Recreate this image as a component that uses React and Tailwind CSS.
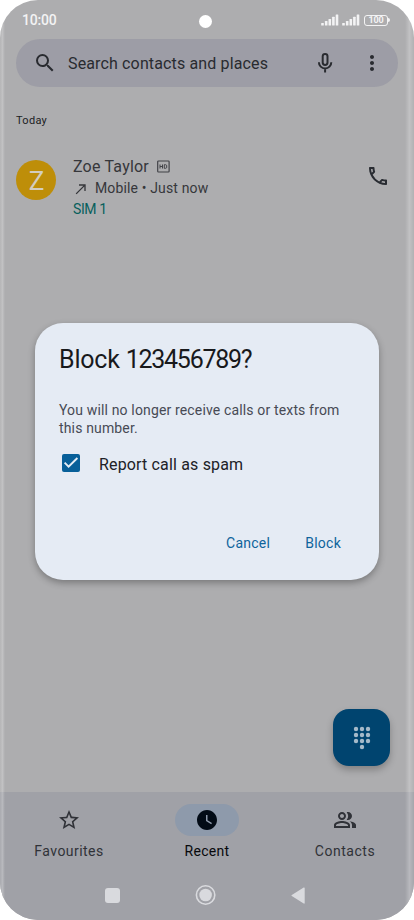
import React, { useState } from "react";
import {
  MdSearch,
  MdMoreVert,
  MdOutlineCall,
  MdNorthEast,
  MdStarBorder,
  MdWatchLater,
  MdOutlinePeopleAlt,
} from "react-icons/md";

const tabs = [
  { name: "Favourites", icon: MdStarBorder, spacing: "tracking-[0.45px]" },
  { name: "Recent", icon: MdWatchLater, spacing: "tracking-[0.3px]" },
  { name: "Contacts", icon: MdOutlinePeopleAlt, spacing: "tracking-[0.55px]" },
];

function Signal() {
  return (
    <svg width="18" height="12" viewBox="0 0 18 12" fill="#f3f3f4">
      <rect x="0.2" y="9" width="2.6" height="2.6" rx="0.5" />
      <rect x="3.9" y="7" width="2.6" height="4.6" rx="0.5" />
      <rect x="7.5" y="5" width="2.6" height="6.6" rx="0.5" />
      <rect x="11.1" y="2.8" width="2.6" height="8.8" rx="0.5" />
      <rect x="14.7" y="0.5" width="2.6" height="11.1" rx="0.5" />
    </svg>
  );
}

function StatusBar() {
  return (
    <div className="flex h-[39px] items-center pl-[22px] pt-px text-[#f3f3f4]">
      <span className="w-[177px] text-[14px] font-medium tracking-[-0.2px]">10:00</span>
      <span className="mt-[2px] size-[13px] rounded-full bg-white" />
      <div className="ml-[109px] flex items-center">
        <Signal />
        <span className="w-[3px]" />
        <Signal />
        <span className="ml-[4px] flex h-[11px] w-[24px] items-center justify-center rounded-[3px] border border-[#f3f3f4] text-[9px] font-bold leading-none tracking-[-0.2px]">
          100
        </span>
        <span className="h-[4px] w-[2px] rounded-r bg-[#f3f3f4]" />
      </div>
    </div>
  );
}

function MicIcon() {
  return (
    <svg className="size-6" viewBox="0 0 24 24" fill="none" stroke="currentColor" strokeWidth="2">
      <rect x="9.7" y="2.9" width="4.8" height="11" rx="2.4" />
      <path d="M5.9 11.2a6.2 6.2 0 0 0 12.4 0M12.1 17.4v4.2" />
    </svg>
  );
}

function CallRow() {
  return (
    <div className="mt-[27px] flex pl-[16px] pr-[24px]">
      <div className="mt-[4px] flex size-10 items-center justify-center rounded-full bg-[#be8e09] pt-[2px] pl-px text-[26px] text-[#d3cdbf]">
        Z
      </div>
      <div className="ml-[17px] flex-1 text-[#36373b]">
        <div className="flex h-[22px] items-center">
          <span className="text-[16px] tracking-[0.2px]">Zoe Taylor</span>
          <svg className="ml-[8px] -mt-px" width="13" height="13" viewBox="0 0 13 13" fill="none" stroke="#414247">
            <rect x="0.7" y="1" width="11.4" height="11" rx="0.8" strokeWidth="1.2" />
            <path d="M3 4.5v4M5.5 4.5v4M3 6.5h2.5M7.3 4.7h1.2c.8 0 1.2.5 1.2 1v1.6c0 .6-.4 1-1.2 1H7.3z" strokeWidth="1" />
          </svg>
        </div>
        <div className="flex h-[21px] items-center text-[14px]">
          <MdNorthEast className="size-[16px]" />
          <span className="ml-[6px] tracking-[0.14px]">Mobile • Just now</span>
        </div>
        <div className="flex h-[21px] items-center text-[14px] tracking-[-0.4px] text-[#075f5c]">SIM 1</div>
      </div>
      <MdOutlineCall className="mt-[8px] size-6 text-[#292c32]" />
    </div>
  );
}

function Dialpad() {
  const dots = [[2, 2], [8, 2], [14, 2], [2, 8], [8, 8], [14, 8], [2, 14], [8, 14], [14, 14], [8, 20]];
  return (
    <svg width="16" height="22" viewBox="0 0 16 22" fill="#a5bac9" overflow="visible">
      {dots.map(([x, y]) => (
        <circle key={`${x}-${y}`} cx={x} cy={y} r="2.2" />
      ))}
    </svg>
  );
}

function BottomNav() {
  return (
    <div className="h-[128px] bg-[#a0a1a7]">
      <div className="grid grid-cols-3 pt-[12px]">
        {tabs.map(({ name, icon: Icon, spacing }) => {
          const active = name === "Recent";
          return (
            <button key={name} className={`flex flex-col items-center ${active ? "text-[#08090c]" : "text-[#303238]"}`}>
              <span className={`flex h-8 w-16 items-center justify-center rounded-full ${active ? "bg-[#8e9aab]" : ""}`}>
                <Icon className={`size-6 ${active ? "text-[#020b16]" : ""}`} />
              </span>
              <span className={`mt-[5px] text-[14px] leading-[20px] ${spacing}`}>{name}</span>
            </button>
          );
        })}
      </div>
      <div className="mt-[23px] flex h-[22px] items-center pl-[105px]">
        <span className="size-[15px] rounded-[3px] bg-[#d9dade]" />
        <svg className="ml-[75px]" width="22" height="22" viewBox="0 0 22 22">
          <circle cx="10.6" cy="11" r="9.2" fill="none" stroke="#d9dade" strokeWidth="1.6" />
          <circle cx="10.6" cy="11" r="6.3" fill="#d9dade" />
        </svg>
        <svg className="ml-[74px]" width="14" height="17" viewBox="0 0 14 17" fill="#d9dade">
          <path d="M13.7 1v15c0 .6-.6.8-1 .5L.8 9c-.5-.3-.5-.8 0-1.1L12.7.5c.5-.3 1 0 1 .5z" />
        </svg>
      </div>
    </div>
  );
}

function BlockDialog() {
  const [report, setReport] = useState(true);

  return (
    <div className="absolute left-[35px] top-[323px] flex h-[257px] w-[344px] flex-col rounded-[28px] bg-[#e5ebf4] px-[24px] shadow-[0_3px_7px_rgba(0,0,0,0.3)]">
      <h2 className="mt-[21px] text-[25px] leading-[32px] tracking-[-0.2px] text-[#18191c]">
        Block <span className="tracking-[-1.25px]">123456789?</span>
      </h2>
      <p className="mt-[25px] text-[14px] leading-[18px] tracking-[0.15px] text-[#474a54]">
        You will no longer receive calls or texts from<br />this number.
      </p>
      <button className="mt-[17px] flex h-[20px] items-center pl-[3px]" onClick={() => setReport(!report)}>
        <span className="-mt-[2px] flex size-[18px] items-center justify-center rounded-[2px] bg-[#075f99]">
          {report && (
            <svg width="16" height="14" viewBox="0 0 16 14" fill="none" stroke="#e5edf5" strokeWidth="1.9">
              <path d="M1.6 6.7l4 4L14.4 2" />
            </svg>
          )}
        </span>
        <span className="ml-[19px] mt-px text-[16px] tracking-[0.16px] text-[#202126]">Report call as spam</span>
      </button>
      <div className="mt-[58px] flex justify-end gap-[35px] pr-[14px] text-[14px] leading-[22px] tracking-[0.25px] text-[#0e649c]">
        <button>Cancel</button>
        <button>Block</button>
      </div>
    </div>
  );
}

export default function App() {
  return (
    <div className="h-[920px] w-[414px] bg-white font-[Roboto,sans-serif]">
      <div className="relative flex h-full flex-col overflow-hidden rounded-[38px] bg-[#adadaf]">
        <StatusBar />
        <div className="ml-[16px] flex h-12 w-[382px] items-center rounded-full bg-[#9d9da6] pl-[17px] text-[#292b30]">
          <MdSearch className="size-6" />
          <span className="ml-[11px] mt-[2px] w-[245px] text-[16px] tracking-[0.14px]">Search contacts and places</span>
          <MicIcon />
          <MdMoreVert className="ml-[23px] size-6" />
        </div>
        <div className="mt-[26px] pl-[16px] text-[11px] leading-[16px] tracking-[0.3px] text-[#202124]">Today</div>
        <CallRow />
        <div className="flex flex-1 items-end justify-end pb-[26px] pr-[24px]">
          <button className="flex size-[57px] items-center justify-center rounded-[16px] bg-[#00446f] shadow-[0_4px_7px_rgba(0,0,0,0.25)]">
            <Dialpad />
          </button>
        </div>
        <BottomNav />
        {/* Edges of the curved screen */}
        <div className="pointer-events-none absolute inset-y-0 left-0 w-[5px] bg-gradient-to-r from-white/10 via-white/25 to-transparent" />
        <div className="pointer-events-none absolute inset-y-0 right-0 w-[9px] bg-gradient-to-r from-transparent via-white/25 to-white/5" />
        <BlockDialog />
      </div>
    </div>
  );
}
